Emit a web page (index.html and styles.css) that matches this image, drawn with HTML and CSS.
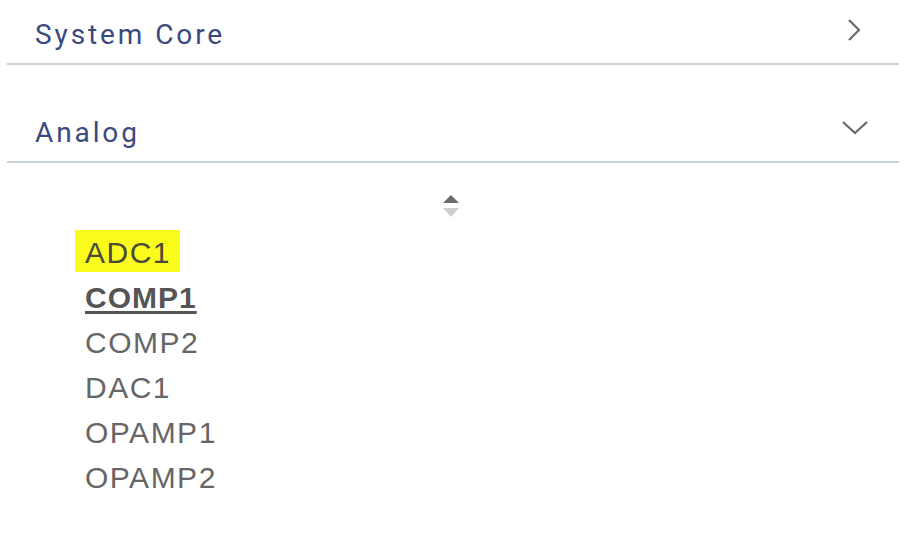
FILE: index.html
```html
<!DOCTYPE html>
<html lang="en">

<head>
    <meta charset="UTF-8">
    <meta name="viewport" content="width=device-width, initial-scale=1.0">
    <title>Peripherals</title>
    <link rel="stylesheet" href="styles.css">
</head>

<body>
    <div class="panel">
        <div class="acc-item">
            <div class="acc-head">
                <span class="acc-title">System Core</span>
                <svg class="chev" width="26" height="26" viewBox="0 0 26 26">
                    <path d="M7 3 L17 13 L7 23" fill="none" stroke="#6a6a6a" stroke-width="2.2" />
                </svg>
            </div>
        </div>
        <div class="acc-item">
            <div class="acc-head">
                <span class="acc-title">Analog</span>
                <svg class="chev" width="26" height="26" viewBox="0 0 26 26">
                    <path d="M1 7 L13 18 L25 7" fill="none" stroke="#6a6a6a" stroke-width="2.2" />
                </svg>
            </div>
            <div class="acc-body">
                <div class="sorter">
                    <svg width="16" height="22" viewBox="0 0 16 22">
                        <polygon points="8,0 16,8 0,8" fill="#6b6b6b" />
                        <polygon points="0,13 16,13 8,22" fill="#cfcfcf" />
                    </svg>
                </div>
                <ul class="ip-list">
                    <li class="ip found">ADC1</li>
                    <li class="ip active">COMP1</li>
                    <li class="ip">COMP2</li>
                    <li class="ip">DAC1</li>
                    <li class="ip">OPAMP1</li>
                    <li class="ip">OPAMP2</li>
                </ul>
            </div>
        </div>
    </div>
</body>

</html>
```
FILE: styles.css
```css
* {
    padding: 0;
    margin: 0;
}

body {
    background: #fff;
}

.panel {
    margin: 0 5px 0 7px;
}

.acc-item + .acc-item {
    margin-top: 33px;
}

.acc-head {
    display: flex;
    align-items: center;
    justify-content: space-between;
    padding: 15px 31px 8px 28px;
    border-bottom: 2px solid #c9d3dc;
}

.acc-title {
    font-family: Roboto, "Liberation Sans", sans-serif;
    font-size: 28px;
    line-height: 40px;
    letter-spacing: 2.9px;
    color: #3b497f;
}

.chev {
    margin-top: -10px;
}

.sorter {
    display: flex;
    justify-content: center;
    margin: 32px 0 0 -4px;
    height: 22px;
}

.ip-list {
    list-style: none;
    margin: 13px 0 0 68px;
}

.ip {
    width: fit-content;
    padding: 4px 10px 0;
    line-height: 38px;
    margin-bottom: 3px;
    font-family: "Liberation Sans", Arial, sans-serif;
    font-size: 30px;
    letter-spacing: 1.5px;
    color: #666;
}

.found {
    background: #fbfb1c;
    padding-right: 9px;
    color: #4a4a3a;
}

.active {
    font-weight: bold;
    text-decoration: underline;
    text-underline-offset: 3px;
    letter-spacing: 1px;
    color: #555;
}
```
